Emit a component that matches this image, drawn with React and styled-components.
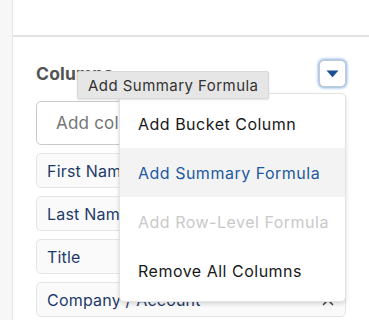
import React from "react";
import styled, { createGlobalStyle } from "styled-components";

const Global = createGlobalStyle`
  html, body { margin: 0; padding: 0; background: #fff; }
  body { font-family: Inter, "Noto Sans", "Liberation Sans", sans-serif; -webkit-font-smoothing: antialiased; }
  * { box-sizing: border-box; }
`;

const Page = styled.div`
  display: flex;
  width: 369px;
  height: 320px;
  overflow: hidden;
`;

const Sidebar = styled.div`
  width: 13px;
  flex: none;
  background: #f7f7f7;
  border-right: 1px solid #e6e6e6;
`;

const Main = styled.div`
  flex: 1;
  display: flex;
  flex-direction: column;
`;

const TopArea = styled.div`
  height: 37px;
  flex: none;
  border-bottom: 2px solid #e2e2e2;
`;

const Section = styled.div`
  position: relative;
  padding: 23px 23px 0 23px;
  display: flex;
  flex-direction: column;
`;

const Header = styled.div`
  display: flex;
  align-items: center;
  justify-content: space-between;
  height: 27px;
`;

const Title = styled.h2`
  margin: 0;
  font-size: 17.5px;
  font-weight: 700;
  color: #545454;
  letter-spacing: 0.2px;
`;

const MenuButton = styled.button`
  width: 27px;
  height: 27px;
  padding: 0;
  display: flex;
  align-items: center;
  justify-content: center;
  background: #fff;
  border: 1px solid #c9c9c9;
  border-radius: 5px;
  box-shadow: 0 0 3px 1px #7fb0ea;
`;

const Search = styled.div`
  margin-top: 14px;
  height: 44px;
  border: 1px solid #c9c9c9;
  border-radius: 5px;
  display: flex;
  align-items: center;
  padding-left: 19px;
  font-size: 17px;
  letter-spacing: 0.2px;
  color: #757575;
`;

const List = styled.div`
  margin-top: 8px;
  display: flex;
  flex-direction: column;
  gap: 8px;
`;

const Pill = styled.div`
  height: 35px;
  display: flex;
  align-items: center;
  justify-content: space-between;
  padding: 0 11px 0 10px;
  background: #fafafa;
  border: 1px solid #e5e5e5;
  border-radius: 5px;
  font-size: 16px;
  letter-spacing: 0.2px;
  color: #1e3a6a;
`;

const Menu = styled.div`
  position: absolute;
  top: 56px;
  right: 23px;
  width: 227px;
  padding: 5px 0 6px;
  background: #fff;
  border: 1px solid #e3e3e3;
  border-radius: 5px;
  box-shadow: 0 2px 4px rgba(0, 0, 0, 0.14);
  display: flex;
  flex-direction: column;
`;

const MenuItem = styled.div`
  height: 49px;
  display: flex;
  align-items: center;
  padding-left: 18px;
  font-size: 16px;
  letter-spacing: 0.5px;
  background: ${(p) => (p.$active ? "#f3f3f3" : "transparent")};
  color: ${(p) => (p.$disabled ? "#c9c9c9" : p.$active ? "#1d5aa0" : "#181818")};
`;

const Tooltip = styled.div`
  position: absolute;
  top: 34px;
  left: 64px;
  height: 28px;
  padding: 0 10px;
  display: flex;
  align-items: center;
  background: #e6e6e6;
  border: 1px solid #d9d9d9;
  border-radius: 2px;
  box-shadow: 0 1px 2px rgba(0, 0, 0, 0.12);
  font-size: 15px;
  letter-spacing: 0.45px;
  color: #333;
  white-space: nowrap;
`;

const Caret = () => (
  <svg width="13" height="8" viewBox="0 0 13 8">
    <path d="M0.5 0.5 H12.5 L6.5 7.2 Z" fill="#1b4f91" />
  </svg>
);

const Close = () => (
  <svg width="12" height="12" viewBox="0 0 12 12">
    <path d="M1.5 1.5 L10.5 10.5 M10.5 1.5 L1.5 10.5" stroke="#3e3e3c" strokeWidth="1.5" strokeLinecap="round" />
  </svg>
);

const columns = ["First Name", "Last Name", "Title", "Company / Account"];

export default function App() {
  return (
    <Page>
      <Global />
      <Sidebar />
      <Main>
        <TopArea />
        <Section>
          <Header>
            <Title>Columns</Title>
            <MenuButton aria-label="Column actions">
              <Caret />
            </MenuButton>
          </Header>
          <Search>Add columns...</Search>
          <List>
            {columns.map((c) => (
              <Pill key={c}>
                <span>{c}</span>
                <Close />
              </Pill>
            ))}
          </List>
          <Menu>
            <MenuItem>Add Bucket Column</MenuItem>
            <MenuItem $active>Add Summary Formula</MenuItem>
            <MenuItem $disabled>Add Row-Level Formula</MenuItem>
            <MenuItem>Remove All Columns</MenuItem>
          </Menu>
          <Tooltip>Add Summary Formula</Tooltip>
        </Section>
      </Main>
    </Page>
  );
}
